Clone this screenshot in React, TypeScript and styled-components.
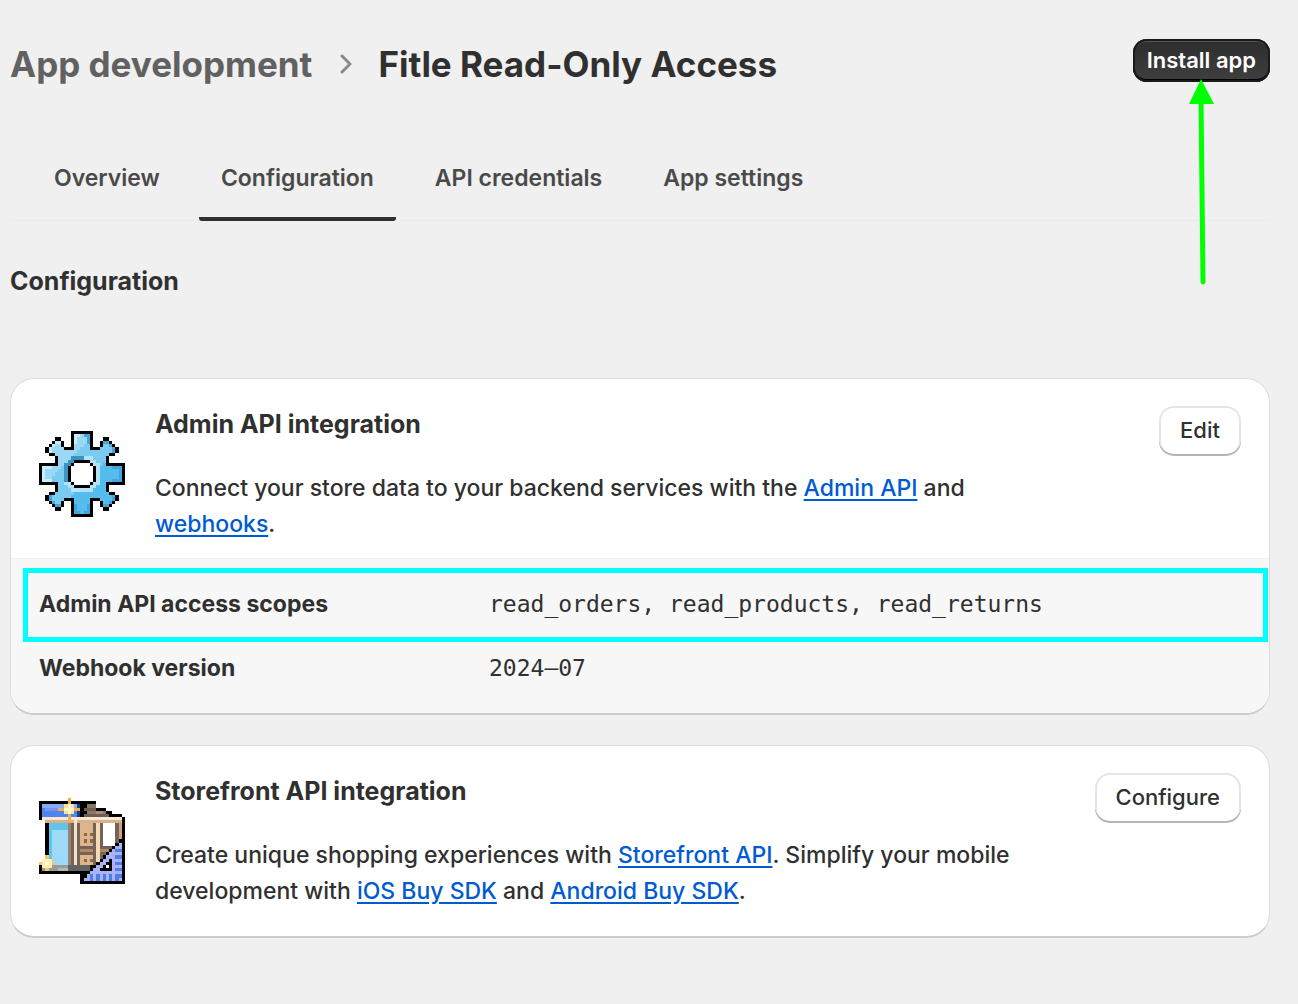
import React from 'react';
import styled, { createGlobalStyle } from 'styled-components';

const Global = createGlobalStyle`
  *, *::before, *::after { box-sizing: border-box; }
  body { margin: 0; background: #f0f0f0; color: #303030; font-family: Inter, "Liberation Sans", sans-serif; font-size: 23px; font-weight: 450; line-height: 36px; }
  h1, h2, h3, p, dl, dd, dt { margin: 0; }
`;

const Page = styled.main`
  padding: 36px 28px 64px 10px;
`;

const Header = styled.header`
  display: flex;
  align-items: flex-start;
  justify-content: space-between;
`;

const Crumbs = styled.div`
  display: flex;
  align-items: center;
  gap: 24px;
  padding-top: 4px;
  font-size: 35px;
  line-height: 48px;
`;

const CrumbLink = styled.a`
  color: #616161;
  font-weight: 650;
  text-decoration: none;
`;

const Title = styled.h1`
  font-size: 35px;
  font-weight: 650;
`;

const PrimaryAction = styled.div`
  position: relative;
  padding-top: 3px;
`;

const Button = styled.button<{ $primary?: boolean }>`
  display: block;
  border: 0;
  font-family: inherit;
  font-size: 22px;
  cursor: pointer;
  ${p => p.$primary ? `
    height: 43px;
    padding: 0 14px 2px;
    border-radius: 14px;
    color: #fff;
    font-weight: 600;
    background: linear-gradient(#2c2c2c, #404040);
    box-shadow: inset 0 0 0 2px #1a1a1a, inset 0 -3px 0 #000, inset 0 3px 0 #555;
  ` : `
    height: 50px;
    padding: 0 21px 2px;
    border-radius: 15px;
    color: #303030;
    font-weight: 550;
    background: #fff;
    box-shadow: inset 0 -2px 0 #b5b5b5, inset 0 0 0 2px #e6e6e6;
  `}
`;

const Arrow = styled.svg`
  position: absolute;
  top: 43px;
  left: 55px;
  pointer-events: none;
`;

const Tabs = styled.nav`
  display: flex;
  gap: 17px;
  margin-top: 48px;
  padding-left: 22px;
  border-bottom: 1px solid #ebebeb;
`;

const Tab = styled.a<{ $active?: boolean }>`
  padding: 24px 22px 21px;
  margin-bottom: -1px;
  color: #4a4a4a;
  font-weight: 600;
  text-decoration: none;
  border-bottom: 4px solid ${p => (p.$active ? '#303030' : 'transparent')};
  border-radius: 3px;
`;

const SectionTitle = styled.h2`
  padding: 42px 0 32px;
  border-bottom: 1px solid #eeeeee;
  font-size: 25px;
  font-weight: 650;
  line-height: 36px;
`;

const Cards = styled.div`
  display: grid;
  gap: 30px;
  margin-top: 46px;
`;

const Card = styled.section`
  overflow: hidden;
  border: 1px solid #dcdcdc;
  border-bottom: 2px solid #cccccc;
  border-radius: 24px;
  background: #fff;
`;

const CardTop = styled.div<{ $last?: boolean }>`
  display: grid;
  grid-template-columns: 88px minmax(0, 1fr) auto;
  align-items: start;
  column-gap: 28px;
  padding: 27px 28px ${p => (p.$last ? '27px' : '16px')};
`;

const Art = styled.svg`
  width: 86px;
  height: 86px;
  margin-top: 25px;
`;

const CardTitle = styled.h3`
  font-size: 25px;
  font-weight: 650;
  line-height: 36px;
`;

const CardText = styled.p`
  max-width: 880px;
  margin-top: 28px;
`;

const Link = styled.a`
  color: #005bd3;
  text-decoration: underline;
  text-underline-offset: 3px;
`;

const Details = styled.dl`
  padding: 9px 1px 19px 12px;
  border-top: 1px solid #f0f0f0;
  background: #f7f7f7;
`;

const DetailRow = styled.div<{ $marked?: boolean }>`
  display: grid;
  grid-template-columns: 450px minmax(0, 1fr);
  align-items: center;
  padding: ${p => (p.$marked ? '13px 11px 15px' : '8px 16px')};
  border: ${p => (p.$marked ? '5px solid #00ffff' : '0')};
`;

const Term = styled.dt`
  font-weight: 650;
`;

const Value = styled.dd`
  font-family: "DejaVu Sans Mono", monospace;
  font-weight: 400;
`;

/* Top-left quarter of the gear, including its centre row and column. */
const GEAR = [
  '..........kkkk',
  '..........kLLb',
  '.....kk...kLbb',
  '....kLLk..kLbb',
  '...kLbbk..kbbb',
  '..kLbbbbkkkbbb',
  '..kLbbbbbbbbbb',
  '...kkbbbbbbbbb',
  '.....kbbbbdddd',
  '.....kbbbddkkk',
  'kkkkkkbbddkwww',
  'kLLLbbbbdkwwww',
  'kLbbbbbbdkwwww',
  'kLbbbbbbdkwwww',
];

function gearColor(x: number, y: number): string | null {
  const c = GEAR[Math.min(y, 26 - y)][Math.min(x, 26 - x)];
  if (c === '.') return null;
  if (c === 'k') return '#000';
  if (c === 'w') return '#fff';
  const far = x > 13 || y > 15;
  if (c === 'L') return far ? '#43a5da' : '#c9ebfb';
  if (c === 'd') return far ? '#b4e2f8' : '#3b93c4';
  if (x + y < 18) return '#9bd8f5';
  return x + y < 30 ? '#7acbf1' : '#55bdee';
}

function GearArt() {
  const cells = [];
  for (let y = 0; y < 27; y++) {
    for (let x = 0; x < 27; x++) {
      const fill = gearColor(x, y);
      if (fill) cells.push(<rect key={`${x}-${y}`} x={x} y={y} width="1" height="1" fill={fill} />);
    }
  }
  return <Art viewBox="0 0 27 27" shapeRendering="crispEdges" aria-hidden="true">{cells}</Art>;
}

type Block = [number, number, number, number, string];

const STORE: Block[] = [
  // roof and awning
  [0, 1, 18, 6, '#000'], [18, 3, 3, 4, '#000'], [21, 4, 2, 3, '#000'], [23, 5, 3, 2, '#000'],
  [1, 2, 11, 1, '#8aa9f6'], [1, 3, 11, 3, '#4f83ee'], [2, 3, 5, 1, '#7097f2'], [12, 2, 1, 4, '#173f86'],
  [15, 2, 3, 1, '#8b7768'], [14, 3, 4, 1, '#6f5d52'], [15, 4, 6, 1, '#8b7768'], [14, 5, 8, 1, '#6f5d52'], [18, 4, 2, 1, '#a18d7b'],
  // walls
  [2, 7, 25, 17, '#000'], [26, 6, 1, 20, '#000'],
  [3, 8, 6, 13, '#62c5e8'], [4, 10, 5, 11, '#9edaf7'],
  [9, 7, 17, 14, '#75635a'], [9, 8, 1, 13, '#97826f'],
  [11, 7, 1, 14, '#f5dfc7'],
  [13, 8, 4, 7, '#dcb58a'], [14, 11, 1, 1, '#8d6b49'], [16, 11, 1, 1, '#8d6b49'], [14, 13, 1, 1, '#8d6b49'], [16, 13, 1, 1, '#8d6b49'],
  [13, 16, 4, 1, '#b28b62'], [13, 18, 4, 3, '#dcb58a'], [14, 19, 1, 1, '#8d6b49'], [16, 19, 1, 1, '#8d6b49'],
  [18, 7, 1, 13, '#f5dab7'], [19, 16, 4, 1, '#b28b62'],
  [20, 8, 4, 7, '#fff'], [24, 7, 1, 8, '#75635a'], [25, 7, 1, 6, '#c6a47d'],
  [1, 6, 25, 1, '#fce8d2'], [2, 7, 24, 1, '#d5b48d'], [11, 7, 1, 1, '#fce8d2'],
  // pavement
  [0, 21, 14, 3, '#000'], [1, 21, 9, 2, '#999'], [9, 21, 7, 2, '#626262'], [6, 22, 3, 1, '#b5b5b5'],
  // set square
  [13, 24, 14, 3, '#000'],
];

const HOLE: Block[] = [
  [22, 19, 1, 1, '#000'], [21, 20, 2, 1, '#000'], [20, 21, 3, 1, '#000'], [19, 22, 4, 1, '#000'], [21, 21, 1, 1, '#fff'],
];

const STARS: Block[] = [
  [9, 0, 1, 8, '#ecb04c'], [6, 3, 7, 1, '#ecb04c'], [8, 2, 3, 3, '#ffe38f'], [9, 2, 1, 3, '#fff8d8'], [8, 3, 3, 1, '#fff8d8'],
  [2, 18, 1, 5, '#f6c766'], [0, 20, 5, 1, '#f6c766'], [1, 19, 3, 3, '#ffefae'], [2, 20, 1, 1, '#fff'],
];

function setSquare(): Block[] {
  const out: Block[] = [];
  for (let y = 12; y < 26; y++) {
    const edge = 38 - y;
    out.push([edge, y, 27 - edge, 1, '#000']);
    if (edge < 25) out.push([edge + 1, y, 25 - edge, 1, '#a9b1f7']);
    if (edge < 23 && y % 2 === 0) out.push([24, y, 2, 1, '#4f7fe6']);
  }
  for (let x = 16; x < 25; x += 2) out.push([x, 24, 1, 2, '#4f7fe6']);
  return out;
}

function StoreArt() {
  const blocks = [...STORE, ...setSquare(), ...HOLE, ...STARS];
  return (
    <Art viewBox="0 0 27 27" shapeRendering="crispEdges" aria-hidden="true">
      {blocks.map(([x, y, w, h, fill], i) => <rect key={i} x={x} y={y} width={w} height={h} fill={fill} />)}
    </Art>
  );
}

export default function App() {
  return (
    <>
      <Global />
      <Page>
        <Header>
          <Crumbs>
            <CrumbLink href="#">App development</CrumbLink>
            <svg width="18" height="20" viewBox="0 0 18 20" fill="none" stroke="#8a8a8a" strokeWidth="3" strokeLinecap="round" strokeLinejoin="round" aria-hidden="true"><path d="M6 2l8 8-8 8" /></svg>
            <Title>Fitle Read-Only Access</Title>
          </Crumbs>
          <PrimaryAction>
            <Button type="button" $primary>Install app</Button>
            <Arrow width="26" height="208" viewBox="0 0 26 208" aria-hidden="true"><path d="M13 0L26 25H1Z" fill="#0f0" /><path d="M13 20L15 203" stroke="#0f0" strokeWidth="5" strokeLinecap="round" /></Arrow>
          </PrimaryAction>
        </Header>
        <Tabs>
          <Tab href="#">Overview</Tab>
          <Tab href="#" $active aria-current="page">Configuration</Tab>
          <Tab href="#">API credentials</Tab>
          <Tab href="#">App settings</Tab>
        </Tabs>
        <SectionTitle>Configuration</SectionTitle>
        <Cards>
          <Card>
            <CardTop>
              <GearArt />
              <div>
                <CardTitle>Admin API integration</CardTitle>
                <CardText>Connect your store data to your backend services with the <Link href="#">Admin API</Link> and <Link href="#">webhooks</Link>.</CardText>
              </div>
              <Button type="button">Edit</Button>
            </CardTop>
            <Details>
              <DetailRow $marked><Term>Admin API access scopes</Term><Value>read_orders, read_products, read_returns</Value></DetailRow>
              <DetailRow><Term>Webhook version</Term><Value>2024–07</Value></DetailRow>
            </Details>
          </Card>
          <Card>
            <CardTop $last>
              <StoreArt />
              <div>
                <CardTitle>Storefront API integration</CardTitle>
                <CardText>Create unique shopping experiences with <Link href="#">Storefront API</Link>. Simplify your mobile development with <Link href="#">iOS Buy SDK</Link> and <Link href="#">Android Buy SDK</Link>.</CardText>
              </div>
              <Button type="button">Configure</Button>
            </CardTop>
          </Card>
        </Cards>
      </Page>
    </>
  );
}
